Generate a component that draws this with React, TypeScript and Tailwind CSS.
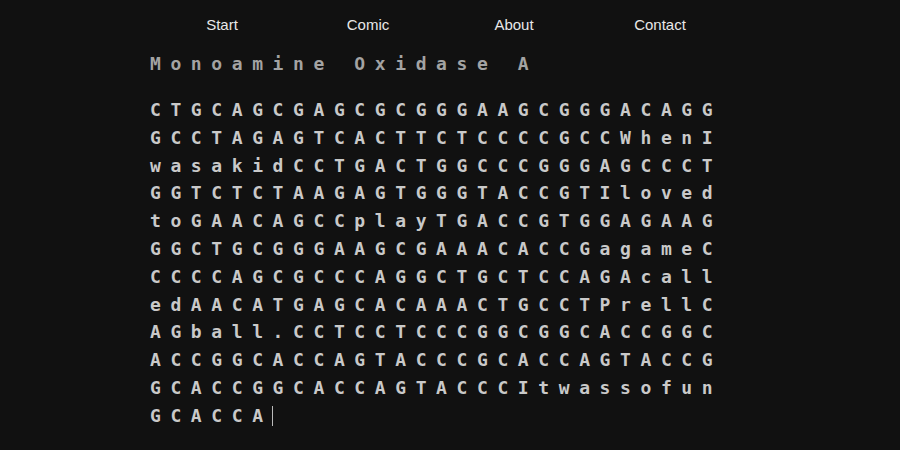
const navItems = ["Start", "Comic", "About", "Contact"];

const title = "Monoamine Oxidase A";

const sequence =
  "CTGCAGCGAGCGCGGGAAGCGGGACAGG" +
  "GCCTAGAGTCACTTCTCCCCGCCWhenI" +
  "wasakidCCTGACTGGCCCGGGAGCCCT" +
  "GGTCTCTAAGAGTGGGTACCGTIloved" +
  "toGAACAGCCplayTGACCGTGGAGAAG" +
  "GGCTGCGGGAAGCGAAACACCGagameC" +
  "CCCCAGCGCCCAGGCTGCTCCAGAcall" +
  "edAACATGAGCACAAACTGCCTPrellC" +
  "AGball.CCTCCTCCCGGCGGCACCGGC" +
  "ACCGGCACCAGTACCCGCACCAGTACCG" +
  "GCACCGGCACCAGTACCCItwassofun" +
  "GCACCA";

export default function App() {
  return (
    <div className="min-h-[450px] w-full bg-[#111111] font-['Liberation_Sans',Arial,sans-serif]">
      <nav className="ml-[149px] grid w-[584px] grid-cols-4 pt-[16px] text-center text-[15px] leading-[18px] text-[#e8e8e8]">
        {navItems.map((item) => (
          <a key={item} href="#" className="block">
            {item}
          </a>
        ))}
      </nav>

      <main className="ml-[150px] w-[584px] font-['DejaVu_Sans_Mono',monospace] text-[18px] font-bold tracking-[9.6px]">
        <h1 className="mt-[19px] leading-[22px] whitespace-pre text-[#a3a3a3]">{title}</h1>

        <p className="mt-[21px] break-all leading-[27.8px] text-[#c9c9c9]">
          {sequence}
          <span className="-ml-[1px] inline-block h-[20px] w-px translate-y-[4px] bg-[#bbbbbb] align-baseline" />
        </p>
      </main>
    </div>
  );
}
